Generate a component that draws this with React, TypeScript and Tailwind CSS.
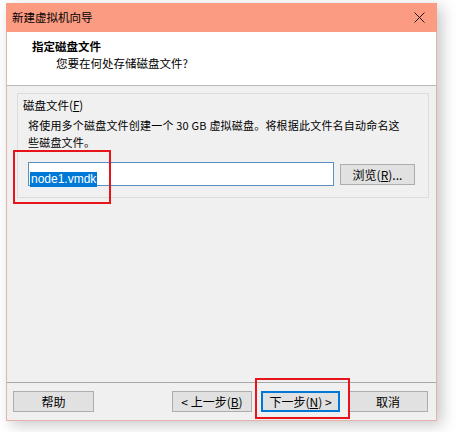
import React from 'react';

const font = { fontFamily: '"Noto Sans CJK SC", "Noto Sans", sans-serif' };

const Btn: React.FC<{ label: React.ReactNode; w: string; primary?: boolean }> = ({ label, w, primary }) => (
  <div
    className={`${w} h-[21px] flex items-center justify-center text-[12px] text-black bg-[#e1e1e1] ${
      primary ? 'border-2 border-[#0078d7]' : 'border border-[#adadad]'
    }`}
  >
    {label}
  </div>
);

export default function App() {
  return (
    <div className="relative w-[459px] h-[432px] bg-white overflow-hidden" style={font}>
      <div className="pt-[3px] pl-[6px]">
        {/* Dialog window */}
        <div className="w-[431px] h-[418px] flex flex-col border-x border-b border-[#e4b2a8] shadow-[5px_4px_14px_rgba(0,0,0,0.22)]">
          {/* Title bar */}
          <div className="h-[29px] bg-[#fb9b82] flex items-center justify-between pl-[6px] pr-[10px] -mx-px">
            <span className="text-[11.5px] text-black">新建虚拟机向导</span>
            <svg width="11" height="11" viewBox="0 0 11 11" className="mr-[2px]">
              <path d="M0.5 0.5 L10.5 10.5 M10.5 0.5 L0.5 10.5" stroke="#1a1a1a" strokeWidth="1" />
            </svg>
          </div>

          {/* Header */}
          <div className="h-[54px] bg-white border-b border-[#b9b9b9] pt-[6px]">
            <div className="pl-[25px] text-[11.5px] font-bold text-black leading-[17px]">指定磁盘文件</div>
            <div className="pl-[49px] text-[11.5px] text-black leading-[17px]">您要在何处存储磁盘文件?</div>
          </div>

          {/* Body */}
          <div className="flex-1 bg-[#f0f0f0] flex flex-col">
            <div className="mt-[7px] ml-[10px] w-[412px] h-[105px] border border-[#dcdcdc] pt-[3px]">
              <div className="pl-[5px] text-[11.5px] text-black leading-[16px]">
                磁盘文件(<span className="underline">F</span>)
              </div>
              <div className="pl-[10px] mt-[4px] text-[11px] text-black leading-[17px] whitespace-nowrap tracking-[0.2px]">
                将使用多个磁盘文件创建一个 30 GB 虚拟磁盘。将根据此文件名自动命名这
                <br />
                些磁盘文件。
              </div>
              <div className="flex items-start mt-[11px] pl-[10px]">
                <div className="w-[306px] h-[24px] bg-white border border-[#5b8fbf] pt-[1px] pl-[1px]">
                  <span
                    className="bg-[#0078d7] text-white text-[12px] leading-[15px] inline-block px-px"
                    style={{ fontFamily: '"Liberation Sans", Arial, sans-serif' }}
                  >
                    node1.vmdk
                  </span>
                </div>
                <div className="ml-[6px] mt-[2px] w-[75px] h-[21px] bg-[#e1e1e1] border border-[#adadad] flex items-center justify-center text-[12px] text-black">
                  浏览(<span className="underline">R</span>)...
                </div>
              </div>
            </div>

            <div className="flex-1" />

            <div className="h-px bg-[#a8a8a8]" />
            <div className="flex items-center pt-[8px] pb-[8px] pl-[6px]">
              <Btn w="w-[81px]" label="帮助" />
              <div className="ml-[78px]">
                <Btn w="w-[80px]" label={<span>&lt; 上一步(<span className="underline">B</span>)</span>} />
              </div>
              <div className="ml-[9px]">
                <Btn w="w-[79px]" primary label={<span>下一步(<span className="underline">N</span>) &gt;</span>} />
              </div>
              <div className="ml-[8px]">
                <Btn w="w-[80px]" label="取消" />
              </div>
            </div>
          </div>
        </div>
      </div>

      {/* Red annotation boxes */}
      <div className="absolute left-[13px] top-[150px] w-[98px] h-[54px] border-2 border-[#e8141c]" />
      <div className="absolute left-[255px] top-[378px] w-[95px] h-[41px] border-2 border-[#e8141c]" />
    </div>
  );
}
